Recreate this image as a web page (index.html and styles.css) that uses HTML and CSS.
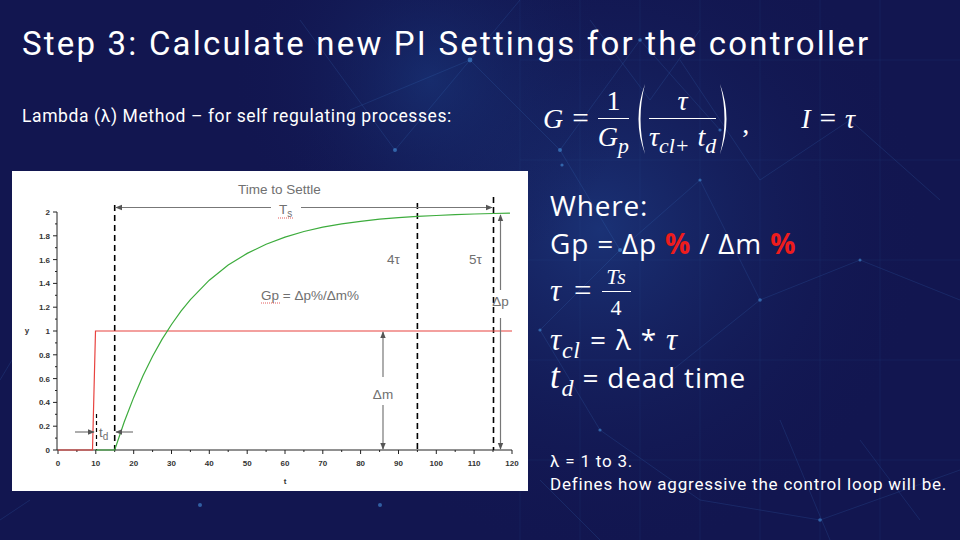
FILE: index.html
```html
<!DOCTYPE html>
<html lang="en">
<head>
<meta charset="utf-8">
<title>Step 3: Calculate new PI Settings</title>
<link rel="stylesheet" href="styles.css">
</head>
<body>
<div class="slide">
  <svg class="bg" viewBox="0 0 960 540" aria-hidden="true">
    <defs>
      <radialGradient id="glow1" cx="600" cy="230" r="330" gradientUnits="userSpaceOnUse">
        <stop offset="0" stop-color="#1d3b82" stop-opacity="0.75"/>
        <stop offset="1" stop-color="#121650" stop-opacity="0"/>
      </radialGradient>
      <radialGradient id="glow2" cx="430" cy="80" r="200" gradientUnits="userSpaceOnUse">
        <stop offset="0" stop-color="#1b3f86" stop-opacity="0.5"/>
        <stop offset="1" stop-color="#121650" stop-opacity="0"/>
      </radialGradient>
    </defs>
    <rect width="960" height="540" fill="#121650"/>
    <rect width="960" height="540" fill="url(#glow1)"/>
    <rect width="960" height="540" fill="url(#glow2)"/>
    <g stroke="#3f7fd0" stroke-opacity="0.22" stroke-width="0.8" fill="none">
      <path d="M300 20 L395 150 L470 60 L560 150 L640 40 L720 130"/>
      <path d="M350 110 L470 60 L520 0"/>
      <path d="M560 150 L620 250 L700 180 L760 300 L660 380"/>
      <path d="M620 250 L540 330 L600 430 L700 500"/>
      <path d="M680 60 L760 180 L850 120 L940 200"/>
      <path d="M760 300 L860 260 L960 300"/>
      <path d="M590 20 L650 100 L700 30"/>
      <path d="M540 480 L600 540 M780 420 L830 540 M860 440 L920 520"/>
      <path d="M700 500 L820 520 L960 470"/>
      <path d="M0 380 L12 360 M0 520 L30 500"/>
    </g>
    <g stroke="#2a4f99" stroke-opacity="0.25" stroke-width="0.6">
      <path d="M520 0 V540 M580 0 V540 M640 0 V540 M700 0 V540 M760 0 V540 M820 0 V540 M880 0 V540"/>
      <path d="M520 60 H960 M520 160 H960 M520 260 H960 M520 360 H960 M520 460 H960"/>
    </g>
    <g fill="#4a9ae6" fill-opacity="0.55">
      <circle cx="395" cy="150" r="2"/>
      <circle cx="470" cy="60" r="2.4"/>
      <circle cx="560" cy="150" r="2"/>
      <circle cx="640" cy="40" r="1.8"/>
      <circle cx="720" cy="130" r="1.6"/>
      <circle cx="620" cy="250" r="2"/>
      <circle cx="700" cy="180" r="1.6"/>
      <circle cx="760" cy="300" r="1.8"/>
      <circle cx="540" cy="330" r="1.6"/>
      <circle cx="600" cy="430" r="1.6"/>
      <circle cx="850" cy="120" r="1.6"/>
      <circle cx="860" cy="260" r="1.5"/>
      <circle cx="380" cy="505" r="2"/>
      <circle cx="200" cy="505" r="2"/>
      <circle cx="820" cy="520" r="1.8"/>
      <circle cx="410" cy="175" r="2.4"/>
      <circle cx="562" cy="165" r="1.6"/>
    </g>
  </svg>

  <div class="content">
    <h1 class="title">Step 3: Calculate new PI Settings for the controller</h1>

    <div class="grid">
      <p class="subtitle">Lambda (λ) Method – for self regulating processes:</p>

      <div class="formula">
        <span class="mi">G</span>
        <span class="mo">=</span>
        <span class="frac">
          <span class="num">1</span>
          <span class="den"><span class="mi">G</span><span class="sub mi">p</span></span>
        </span>
        <svg class="paren" viewBox="0 0 16 72" aria-hidden="true"><path d="M14 1 Q1 36 14 71 Q5 36 14 1 Z" fill="#fff"/></svg>
        <span class="frac">
          <span class="num mi">τ</span>
          <span class="den"><span class="mi">τ</span><span class="sub mi">cl+</span><span class="mi gapl">t</span><span class="sub mi">d</span></span>
        </span>
        <svg class="paren" viewBox="0 0 16 72" aria-hidden="true"><path d="M2 1 Q15 36 2 71 Q11 36 2 1 Z" fill="#fff"/></svg>
        <span class="comma">,</span>
        <span class="mi eq2">I</span>
        <span class="mo">=</span>
        <span class="mi">τ</span>
      </div>

      <div class="chart">
        <svg viewBox="0 0 516 320" width="516" height="320">
          <defs>
            <marker id="ah" viewBox="0 0 10 10" refX="9" refY="5" markerWidth="7" markerHeight="7" orient="auto-start-reverse" markerUnits="userSpaceOnUse">
              <path d="M0 1 L10 5 L0 9 Z" fill="#555"/>
            </marker>
          </defs>
          <g stroke="#222" stroke-width="1" fill="none">
            <path d="M45 41 V279 H500"/>
            <path d="M41 41 H45 M41 64.8 H45 M41 88.6 H45 M41 112.4 H45 M41 136.2 H45 M41 160 H45 M41 183.8 H45 M41 207.6 H45 M41 231.4 H45 M41 255.2 H45 M41 279 H45"/>
            <path d="M43 52.9 H45 M43 76.7 H45 M43 100.5 H45 M43 124.3 H45 M43 148.1 H45 M43 171.9 H45 M43 195.7 H45 M43 219.5 H45 M43 243.3 H45 M43 267.1 H45"/>
            <path d="M46 279 V283 M83.8 279 V283 M121.7 279 V283 M159.5 279 V283 M197.3 279 V283 M235.2 279 V283 M273 279 V283 M310.8 279 V283 M348.6 279 V283 M386.5 279 V283 M424.3 279 V283 M462.1 279 V283 M500 279 V283"/>
            <path d="M64.9 279 V281 M102.7 279 V281 M140.6 279 V281 M178.4 279 V281 M216.2 279 V281 M254.1 279 V281 M291.9 279 V281 M329.7 279 V281 M367.6 279 V281 M405.4 279 V281 M443.2 279 V281 M481 279 V281"/>
          </g>
          <g class="tick" text-anchor="end">
            <text x="38" y="44">2</text>
            <text x="38" y="67.8">1.8</text>
            <text x="38" y="91.6">1.6</text>
            <text x="38" y="115.4">1.4</text>
            <text x="38" y="139.2">1.2</text>
            <text x="38" y="163">1</text>
            <text x="38" y="186.8">0.8</text>
            <text x="38" y="210.6">0.6</text>
            <text x="38" y="234.4">0.4</text>
            <text x="38" y="258.2">0.2</text>
            <text x="38" y="282">0</text>
          </g>
          <g class="tick" text-anchor="middle">
            <text x="46" y="295">0</text>
            <text x="83.8" y="295">10</text>
            <text x="121.7" y="295">20</text>
            <text x="159.5" y="295">30</text>
            <text x="197.3" y="295">40</text>
            <text x="235.2" y="295">50</text>
            <text x="273" y="295">60</text>
            <text x="310.8" y="295">70</text>
            <text x="348.6" y="295">80</text>
            <text x="386.5" y="295">90</text>
            <text x="424.3" y="295">100</text>
            <text x="462.1" y="295">110</text>
            <text x="500" y="295">120</text>
            <text x="273" y="313">t</text>
            <text x="15" y="162">y</text>
          </g>
          <g stroke="#000" stroke-width="1.6" stroke-dasharray="6 4" fill="none">
            <path d="M102.7 34 V279"/>
            <path d="M405.4 32 V279"/>
            <path d="M481.5 26 V279"/>
            <path d="M84.5 243 V279" stroke-dasharray="4 3" stroke-width="1.2"/>
          </g>
          <polyline fill="none" stroke="#e8423f" stroke-width="1.2" points="46,279 80.5,279 83.5,160 500,160"/>
          <polyline fill="none" stroke="#3dac3d" stroke-width="1.2" points="83.8,279 102.7,279 112.2,251 121.7,226.4 131.1,204.6 140.6,185.3 150,168.4 159.5,153.5 169,140.2 178.4,128.6 197.3,109.2 216.2,94.1 235.2,82.4 254.1,73.2 273,66.1 291.9,60.5 310.8,56.2 329.7,52.9 348.6,50.3 367.6,48.1 386.5,46.6 405.4,45.4 424.3,44.5 443.2,43.6 462.1,43 481,42.5 498,42.2"/>
          <g stroke="#777" stroke-width="1.2" fill="none">
            <path d="M259 36.5 H104" marker-end="url(#ah)"/>
            <path d="M289 36.5 H480" marker-end="url(#ah)"/>
            <path d="M488.5 119 V44" marker-end="url(#ah)"/>
            <path d="M488.5 147 V278" marker-end="url(#ah)"/>
            <path d="M371 206 V161" marker-end="url(#ah)"/>
            <path d="M371 234 V278" marker-end="url(#ah)"/>
            <path d="M63 261 H82" marker-end="url(#ah)"/>
            <path d="M121 261 H104" marker-end="url(#ah)"/>
          </g>
          <g class="lbl">
            <text x="226" y="23">Time to Settle</text>
            <text x="267" y="43">T<tspan class="subs" dy="3">s</tspan></text>
            <text x="375" y="93">4τ</text>
            <text x="457" y="93">5τ</text>
            <text x="249" y="129">Gp = Δp%/Δm%</text>
            <text x="488.5" y="135" text-anchor="middle">Δp</text>
            <text x="371" y="228" text-anchor="middle">Δm</text>
            <text x="87" y="266">t<tspan class="subs" dy="3">d</tspan></text>
          </g>
          <g stroke="#d33" stroke-width="0.8" stroke-dasharray="1 1">
            <path d="M266 47 H282"/>
            <path d="M249 132 H268"/>
          </g>
        </svg>
      </div>

      <div class="right">
        <div class="line">Where:</div>
        <div class="line">Gp = Δp <span class="red">%</span> / Δm <span class="red">%</span></div>
        <div class="line mline">
          <span class="mi big">τ</span>
          <span class="mo big">=</span>
          <span class="frac small">
            <span class="num mi">Ts</span>
            <span class="den">4</span>
          </span>
        </div>
        <div class="line wide"><span class="mi big">τ</span><span class="sub mi bigsub">cl</span> = λ * <span class="mi big">τ</span></div>
        <div class="line"><span class="mi big tbig">t</span><span class="sub mi bigsub">d</span> = dead time</div>
        <div class="notes">
          <div>λ = 1 to 3.</div>
          <div>Defines how aggressive the control loop will be.</div>
        </div>
      </div>
    </div>
  </div>
</div>
</body>
</html>
```

FILE: styles.css
```css
html, body {
  margin: 0;
  padding: 0;
  background: #121650;
}

.slide {
  width: 960px;
  height: 540px;
  position: relative;
  overflow: hidden;
  color: #fff;
  font-family: Roboto, "Liberation Sans", sans-serif;
}

.bg {
  position: absolute;
  left: 0;
  top: 0;
  width: 960px;
  height: 540px;
}

.content {
  position: relative;
}

.title {
  margin: 0;
  padding: 24px 0 0 22px;
  height: 40px;
  font-size: 33px;
  line-height: 40px;
  font-weight: 400;
  letter-spacing: 2.2px;
  white-space: nowrap;
}

.grid {
  display: grid;
  grid-template-columns: 530px 430px;
  grid-template-rows: 107px 320px;
}

.subtitle {
  margin: 0;
  padding-left: 22px;
  align-self: center;
  font-size: 17.5px;
  line-height: 20px;
  letter-spacing: 0.6px;
  padding-bottom: 4px;
  white-space: nowrap;
}

.formula {
  display: flex;
  align-items: center;
  padding-left: 13px;
  font-family: "Liberation Serif", "DejaVu Serif", serif;
  font-size: 28px;
  padding-top: 2px;
}

.mi {
  font-family: "Liberation Serif", "DejaVu Serif", serif;
  font-style: italic;
}

.mo {
  font-family: "Liberation Serif", "DejaVu Serif", serif;
  margin: 0 9px;
  font-size: 1.05em;
}

.frac {
  display: inline-flex;
  flex-direction: column;
  align-items: center;
  line-height: 1.05;
}

.frac .num {
  display: block;
  align-self: stretch;
  text-align: center;
  border-bottom: 1.4px solid #fff;
  padding: 0 3px 3px;
}

.frac .den {
  display: block;
  padding-top: 3px;
  white-space: nowrap;
}

.sub {
  font-size: 0.78em;
  position: relative;
  top: 0.3em;
}

.gapl {
  margin-left: 8px;
}

.paren {
  width: 16px;
  height: 72px;
  margin: 0 2px;
}

.comma {
  margin-left: 6px;
  align-self: center;
  padding-top: 10px;
}

.eq2 {
  margin-left: 52px;
}

.chart {
  margin-left: 12px;
  width: 516px;
  height: 320px;
  background: #fff;
}

.chart svg {
  display: block;
}

.tick {
  font-family: "Liberation Sans", Arial, sans-serif;
  font-size: 8px;
  font-weight: 700;
  fill: #333;
}

.lbl {
  font-family: "Liberation Sans", Arial, sans-serif;
  font-size: 13.5px;
  fill: #707070;
}

.lbl .subs {
  font-size: 10px;
}

.right {
  padding-left: 20px;
  padding-top: 15px;
}

.line {
  font-family: "Open Sans", Roboto, sans-serif;
  font-size: 28px;
  line-height: 38px;
  height: 38px;
  letter-spacing: 0.8px;
  white-space: nowrap;
}

.line.wide {
  word-spacing: 1px;
}

.mline {
  height: 58px;
  display: flex;
  align-items: center;
}

.big {
  font-size: 31px;
}

.tbig {
  font-size: 35px;
  margin-right: 1px;
}

.bigsub {
  font-size: 24px;
  top: 0.35em;
}

.mline .mo {
  margin: 0 10px 0 12px;
  font-size: 31px;
}

.frac.small {
  font-size: 22px;
  padding-top: 2px;
}

.frac.small .num {
  padding: 0 4px 3px;
}

.frac.small .den {
  font-family: "Liberation Serif", serif;
  padding-top: 4px;
}

.red {
  color: #ee1c1c;
  font-weight: 700;
}

.notes {
  margin-top: 54px;
  font-size: 17px;
  line-height: 23px;
  letter-spacing: 0.8px;
  white-space: nowrap;
}
```
